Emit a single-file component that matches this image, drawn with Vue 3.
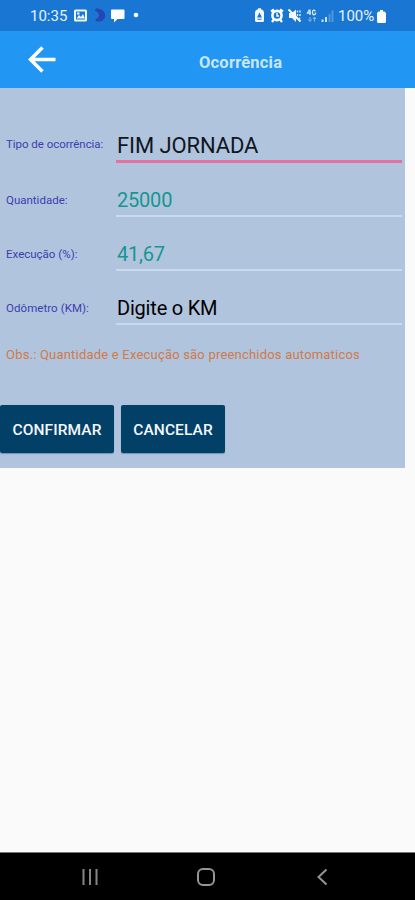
<script setup>
const fields = [
  { label: 'Tipo de ocorrência:', value: 'FIM JORNADA', kind: 'active' },
  { label: 'Quantidade:', value: '25000', kind: 'auto' },
  { label: 'Execução (%):', value: '41,67', kind: 'auto' },
  { label: 'Odômetro (KM):', value: 'Digite o KM', kind: 'entry' },
]
</script>

<template>
  <div class="screen">
    <div class="status">
      <span class="time">10:35</span>
      <svg class="left-icons" width="66" height="18" viewBox="0 0 66 18">
        <path fill="#eef6ff" fill-rule="evenodd" d="M1.500 2.500h10q1.500 0 1.500 1.500v9q0 1.500-1.500 1.500h-10q-1.500 0-1.500-1.500v-9q0-1.500 1.500-1.500zM2 4.500v8h9v-8zM2.500 11.500l2.500-3.500 2 2 2-3 2 4.500zM3 5.500h2.500v2H3z" />
        <path fill="#2546b4" d="M22 1.500c5 0 9.200 2.500 9.200 7s-4 6.500-8.500 6c-2-.5-1-2 0-3 2-1 2.500-2 2.200-4-.3-2-2-3-4-3.500z" />
        <path fill="#fff" d="M38 2.500h11.500q1 0 1 1v7.500q0 1-1 1H43.500l-3.500 3.500V12h-2q-1 0-1-1V3.500q0-1 1-1z" />
        <circle cx="62" cy="8" r="2.300" fill="#fff" />
      </svg>
      <svg class="right-icons" width="80" height="18" viewBox="0 0 80 18">
        <path fill="#f2f8ff" fill-rule="evenodd" d="M3 2.500h1V1.300h3v1.200h1q2 1 2 3v8q0 1.500-1.500 1.500h-6Q1 15 1 13.500v-8q0-2 2-3zM5.500 5.500L3 10.500h5zM3.500 11.800v1h4v-1z" />
        <path d="M17 4.500l3-2M26 2.500l3 2M19.500 13l-1.500 2M26.500 13l1.500 2" stroke="#fff" stroke-width="2.200" />
        <circle cx="23" cy="8.500" r="4.600" fill="none" stroke="#fff" stroke-width="2.600" />
        <path d="M23 6V9H25" fill="none" stroke="#fff" stroke-width="1.400" />
        <path fill="#f2f8ff" d="M35 6h3l4-3.500v12.500l-4-4h-3z" />
        <path d="M34.500 2.500L46.500 14.500" stroke="#fff" stroke-width="2" />
        <path d="M43.500 3.500v2M46 3.500v2M43.500 7v2M46 7v2M45.500 10.500v2" stroke="#d4e8fc" stroke-width="1.500" />
        <path d="M55.500 2.500L53.500 6H57M56 2.500v5.500M61.500 4Q58.500 2 58.500 5.500t3 1.500V5.500" fill="none" stroke="#d4e8fc" stroke-width="1.300" />
        <path d="M56 10v4M54.500 12.500l1.500 2 1.500-2M60.500 14.500v-4M59 12l1.500-2 1.500 2" fill="none" stroke="#8bbcec" stroke-width="1" />
        <path d="M68.500 12.500v2.500M72 10v5" stroke="#c8e0f8" stroke-width="2" />
        <path d="M75.500 7v8M78.500 3.500v11.500" stroke="#4d97de" stroke-width="2" />
      </svg>
      <span class="percent">100%</span>
      <svg class="battery" width="9" height="14" viewBox="0 0 9 14">
        <path fill="#fff" d="M3 0h3v1.500h1.500L9 3v8.500q0 1.500-1.500 1.500h-6Q0 13 0 11.500V3l1.500-1.500H3z" />
      </svg>
    </div>
    <header class="bar">
      <svg class="back" width="28" height="28" viewBox="0 0 28 28">
        <path d="M27.500 13.500H3M14.500 1.500l-12 12 12 12" fill="none" stroke="#fff" stroke-width="3.500" />
      </svg>
      <h1 class="title">Ocorrência</h1>
    </header>
    <main class="panel">
      <div v-for="f in fields" :key="f.label" class="row" :class="f.kind">
        <label class="label">{{ f.label }}</label>
        <div class="field">{{ f.value }}</div>
      </div>
      <p class="note">Obs.: Quantidade e Execução são preenchidos automaticos</p>
      <div class="buttons">
        <button class="confirm">CONFIRMAR</button>
        <button class="cancel">CANCELAR</button>
      </div>
    </main>
    <nav class="nav">
      <svg width="18" height="18" viewBox="0 0 18 18">
        <path d="M2.500 1v16M9 1v16M15.500 1v16" stroke="#858585" stroke-width="2" />
      </svg>
      <svg width="20" height="20" viewBox="0 0 20 20">
        <rect x="2" y="2" width="16" height="16" rx="5" fill="none" stroke="#959595" stroke-width="2" />
      </svg>
      <svg width="18" height="18" viewBox="0 0 18 18">
        <path d="M13.500 1.500L5.500 9l8 7.500" fill="none" stroke="#959595" stroke-width="2" />
      </svg>
    </nav>
  </div>
</template>

<style>
body {
  background: #fafafa;
}
</style>

<style scoped>
.screen {
  display: flex;
  flex-direction: column;
  width: 415px;
  height: 900px;
  background: #fafafa;
  font-family: Roboto, "Liberation Sans", sans-serif;
}
.status {
  display: flex;
  align-items: center;
  box-sizing: border-box;
  height: 31px;
  padding: 1px 0 0 30px;
  background: #1976d2;
  color: #e6f2ff;
  font-size: 15px;
}
.time {
  width: 44px;
}
.right-icons {
  margin-left: 114px;
}
.percent {
  width: 39px;
  margin-left: 4px;
}
.battery {
  margin-top: 1px;
}
.bar {
  display: flex;
  align-items: center;
  box-sizing: border-box;
  height: 57px;
  padding-left: 28px;
  background: #2196f3;
}
.title {
  margin: 6px 0 0 143px;
  color: #c9e6fd;
  font-size: 16.500px;
  font-weight: 700;
  letter-spacing: 0.2px;
  line-height: 20px;
}
.panel {
  box-sizing: border-box;
  width: 405px;
  height: 380px;
  padding-top: 38px;
  background: #b0c4de;
}
.row {
  display: grid;
  grid-template-columns: 110px 286px;
  height: 54px;
  padding-left: 6px;
}
.row.active {
  height: 37px;
  margin-bottom: 18px;
}
.label {
  padding-top: 12px;
  color: #3d3db0;
  font-size: 11.500px;
  line-height: 14px;
}
.active .label {
  padding-top: 11px;
  letter-spacing: -0.04px;
}
.entry .label {
  letter-spacing: 0.06px;
}
.field {
  box-sizing: border-box;
  height: 36px;
  border-bottom: 2px solid #c9d9ee;
  color: #000;
  font-size: 20px;
  letter-spacing: -0.2px;
  line-height: 39px;
  padding-left: 1px;
}
.active .field {
  height: 37px;
  border-bottom: 3px solid #e670a0;
  color: #10161e;
  font-size: 22px;
  letter-spacing: -0.1px;
}
.auto .field {
  color: #16968f;
}
.note {
  margin: 4px 0 0 6px;
  color: #d07a48;
  font-size: 13px;
  letter-spacing: 0.2px;
  line-height: 16px;
}
.buttons {
  display: flex;
  gap: 7px;
  margin-top: 42px;
}
button {
  height: 48px;
  padding: 2px 0 0;
  border: 0;
  border-radius: 2px;
  background: #034068;
  box-shadow: 0 1px 1px rgba(30, 70, 110, 0.4);
  color: #f4f8fc;
  font-family: inherit;
  font-size: 15.500px;
  font-weight: 500;
  letter-spacing: 0.1px;
}
.confirm {
  width: 114px;
}
.cancel {
  width: 104px;
}
.nav {
  display: flex;
  align-items: center;
  justify-content: space-between;
  box-sizing: border-box;
  height: 48px;
  margin-top: auto;
  padding: 0 84px 0 81px;
  border-top: 1px solid #777;
  background: #000;
}
</style>
